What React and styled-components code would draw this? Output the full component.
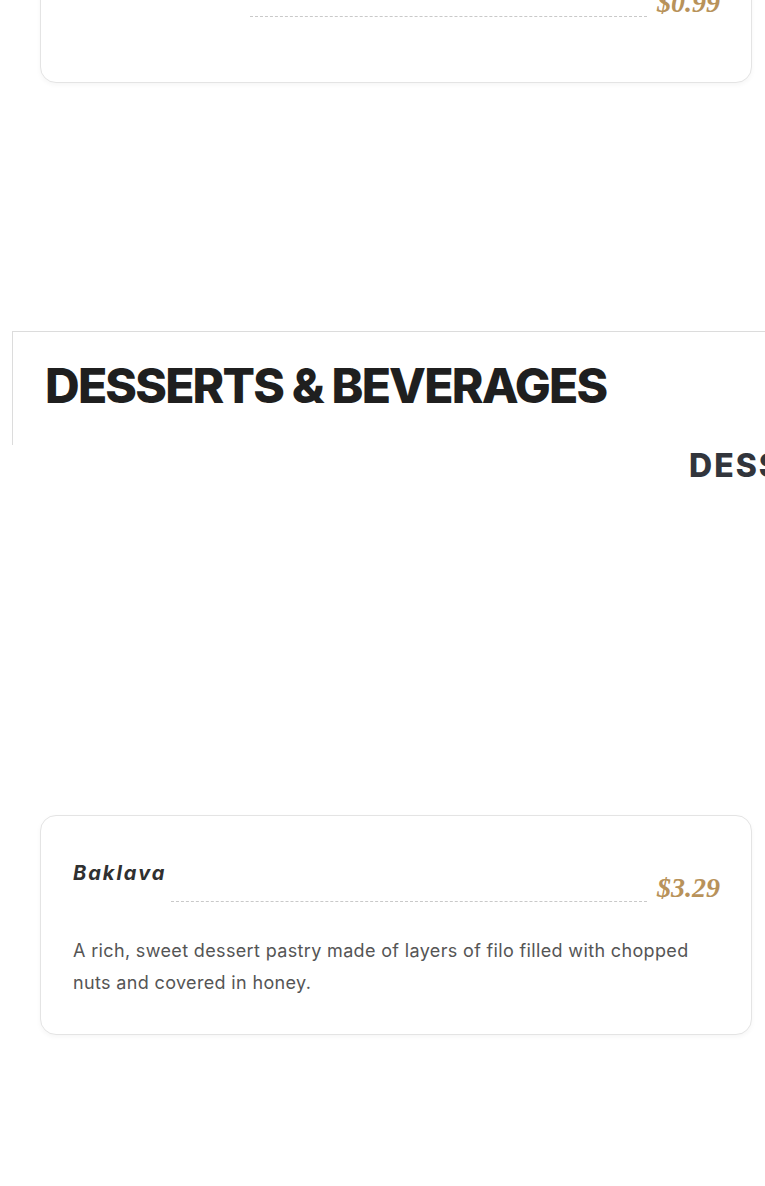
import React from "react";
import styled, { createGlobalStyle } from "styled-components";

const Global = createGlobalStyle`
  html, body { margin: 0; padding: 0; background: #fff; }
  body { overflow-x: hidden; font-family: Inter, "Noto Sans", sans-serif; }
  #root { width: 765px; height: 1186px; overflow: hidden; }
`;

const Page = styled.div`
  margin-top: -70px;
  display: flex;
  flex-direction: column;
`;

const Card = styled.div`
  margin: ${(p) => p.$top || 0}px 13px 0 40px;
  background: #fff;
  border: 1px solid #e4e4e4;
  border-radius: 16px;
  box-shadow: 0 2px 5px rgba(0, 0, 0, 0.04);
  padding: 42px 31px ${(p) => p.$bottom || 35}px 32px;
`;

const Row = styled.div`
  display: flex;
  align-items: flex-end;
`;

const Name = styled.h3`
  margin: 0;
  align-self: flex-start;
  font-family: Inter, sans-serif;
  font-style: italic;
  font-weight: 700;
  font-size: 20px;
  line-height: 30px;
  letter-spacing: 2px;
  color: #303030;
  white-space: nowrap;
`;

const Dots = styled.span`
  flex: 1;
  margin: 0 10px 3px 5px;
  border-bottom: 1px dashed #c9c9c9;
  height: 43px;
`;

const Price = styled.span`
  font-family: "Liberation Serif", serif;
  font-style: italic;
  font-weight: 700;
  font-size: 28px;
  line-height: 34px;
  color: #b8925a;
`;

const Description = styled.p`
  margin: 30px 0 0;
  font-family: Inter, sans-serif;
  font-size: 18px;
  line-height: 32px;
  letter-spacing: 0.35px;
  color: #555;
`;

const SectionHeader = styled.div`
  margin: 248px 0 0 12px;
  border-top: 1px solid #dcdcdc;
  border-left: 1px solid #dcdcdc;
  height: 114px;
  padding: 0 0 6px 32px;
  box-sizing: border-box;
  display: flex;
  align-items: center;
`;

const SectionTitle = styled.h2`
  margin: 0;
  font-family: Inter, sans-serif;
  font-weight: 800;
  font-size: 48px;
  line-height: 1;
  letter-spacing: -1.8px;
  color: #1f1f1f;
  white-space: nowrap;
`;

const SubTitle = styled.div`
  padding-left: 689px;
  margin-top: 1px;
  font-family: Inter, sans-serif;
  font-weight: 800;
  font-size: 32px;
  line-height: 40px;
  letter-spacing: 2px;
  color: #32353c;
  white-space: nowrap;
`;

function MenuItem({ name, price, desc, top, bottom }) {
  return (
    <Card $top={top} $bottom={bottom}>
      <Row>
        <Name>{name}</Name>
        <Dots />
        <Price>{price}</Price>
      </Row>
      {desc && <Description>{desc}</Description>}
    </Card>
  );
}

export default function App() {
  return (
    <>
      <Global />
      <Page>
        <MenuItem name="Turkish Coffee" price="$0.99" bottom={62} />
        <SectionHeader>
          <SectionTitle>DESSERTS &amp; BEVERAGES</SectionTitle>
        </SectionHeader>
        <SubTitle>DESSERTS</SubTitle>
        <MenuItem
          top={329}
          name="Baklava"
          price="$3.29"
          desc="A rich, sweet dessert pastry made of layers of filo filled with chopped nuts and covered in honey."
        />
      </Page>
    </>
  );
}
